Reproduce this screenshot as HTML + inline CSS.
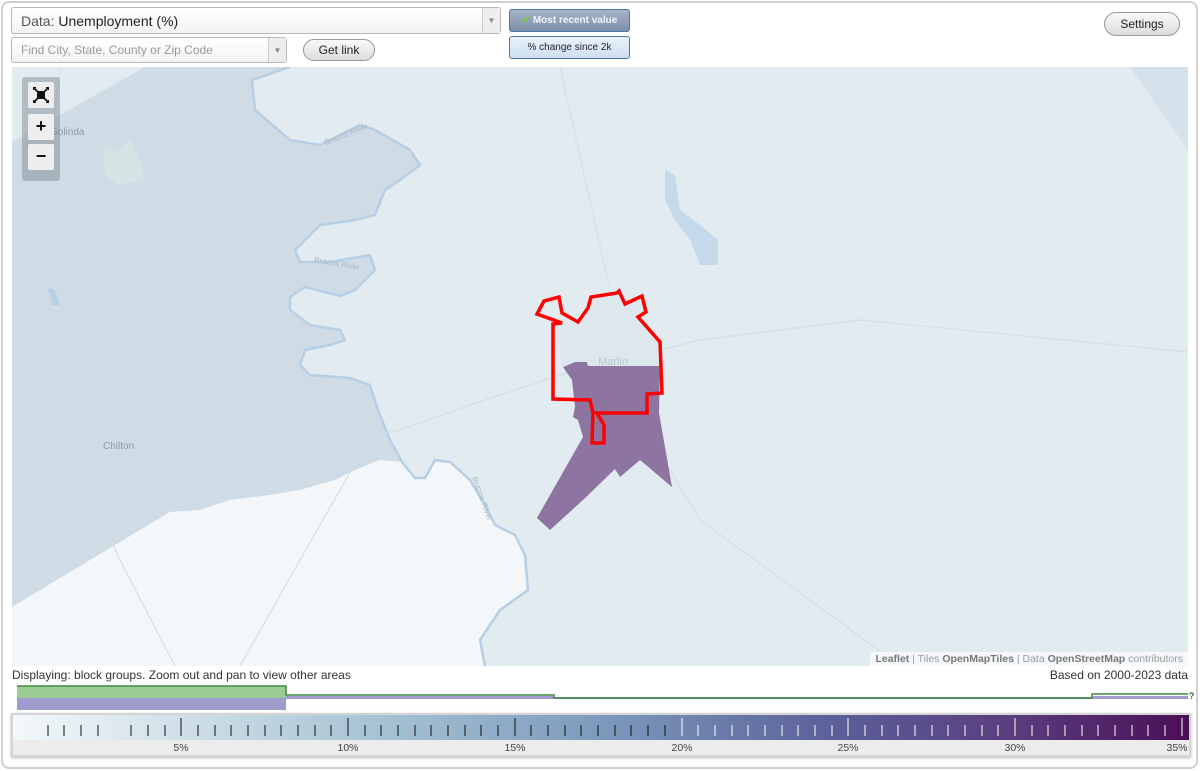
<!DOCTYPE html>
<html><head><meta charset="utf-8"><style>
*{box-sizing:border-box;margin:0;padding:0}
body{width:1200px;height:771px;background:#fff;font-family:"Liberation Sans",Arial,sans-serif;position:relative;overflow:hidden}
.frame{position:absolute;left:1px;top:1px;width:1197px;height:768px;border:2px solid #d0d0d0;border-radius:8px}
.sel{position:absolute;border:1px solid #b8b8b8;border-radius:3px;background:linear-gradient(#fff,#f3f3f3)}
.arr{position:absolute;right:0;top:0;bottom:0;width:18px;border-left:1px solid #ccc;background:#eee;color:#888;font-size:8px;text-align:center}
.btn{position:absolute;border:1px solid #999;border-radius:12px;background:linear-gradient(#fafafa,#dcdcdc);font-size:12px;color:#222;text-align:center}
.tb{position:absolute;border:1px solid #4a78a8;border-radius:3px;font-size:10px;text-align:center}
.map{position:absolute;left:12px;top:67px;width:1176px;height:599px;overflow:hidden;background:#e2ebf0}
.zc{position:absolute;left:10px;top:10px;width:38px;height:104px;background:rgba(120,130,140,.45);border-radius:3px}
.zb{position:absolute;left:6px;width:26px;height:26px;background:#eee;border-radius:2px;text-align:center;font-weight:bold;font-size:18px;line-height:25px;color:#111}
</style></head><body>
<div class="frame"></div>
<div class="sel" style="left:11px;top:7px;width:490px;height:27px"><span style="position:absolute;left:9px;top:5px;font-size:14px;color:#555">Data: <span style="color:#222">Unemployment (%)</span></span><div class="arr" style="line-height:26px">▼</div></div>
<div class="sel" style="left:11px;top:37px;width:276px;height:26px"><span style="position:absolute;left:9px;top:5px;font-size:12px;color:#999">Find City, State, County or Zip Code</span><div class="arr" style="line-height:25px">▼</div></div>
<div class="btn" style="left:303px;top:39px;width:72px;height:22px;line-height:20px">Get link</div>
<div class="tb" style="left:509px;top:9px;width:121px;height:23px;background:linear-gradient(#a7b4c8,#7d8ea8);color:#f0f4fa;font-weight:bold;line-height:21px"><span style="color:#7c3">✔</span> Most recent value</div>
<div class="tb" style="left:509px;top:36px;width:121px;height:23px;background:linear-gradient(#eaf2fb,#cddff2);color:#223;line-height:21px">% change since 2k</div>
<div class="btn" style="left:1104px;top:12px;width:76px;height:24px;line-height:22px">Settings</div>

<div class="map">
<svg width="1176" height="599" viewBox="12 67 1176 599" style="position:absolute;left:0;top:0">
<polygon points="1130,67 1188,67 1188,150" fill="#d5e1ea"/>
<polygon points="12,142 145,67 290,67 252,80 255,110 290,140 320,145 360,125 375,130 410,150 420,165 400,180 385,190 375,215 355,220 320,225 295,250 300,262 330,262 370,255 375,270 355,290 340,296 305,287 290,297 290,310 310,325 340,330 345,340 330,345 305,350 300,365 310,375 350,378 370,385 378,410 390,440 402,462 380,460 355,470 335,480 300,490 270,495 230,500 200,510 170,512 12,607" fill="#cfdce6"/>
<polygon points="12,607 170,512 200,510 230,500 270,495 300,490 335,480 355,470 380,460 402,462 415,478 425,478 435,460 450,462 470,480 485,505 495,525 515,535 525,555 528,590 500,610 480,640 485,666 12,666" fill="#f3f7f9"/>
<polyline points="290,67 252,80 255,110 290,140 320,145 360,125 375,130 410,150 420,165 400,180 385,190 375,215 355,220 320,225 295,250 300,262 330,262 370,255 375,270 355,290 340,296 305,287 290,297 290,310 310,325 340,330 345,340 330,345 305,350 300,365 310,375 350,378 370,385 378,410 390,440 402,462 415,478 425,478 435,460 450,462 470,480 485,505 495,525 515,535 525,555 528,590 500,610 480,640 485,666" fill="none" stroke="#b7cfe4" stroke-width="2.5"/>
<g fill="none" stroke="#d6dee3" stroke-width="1.2">
<polyline points="12,408 70,412 150,425 300,427 360,438 400,430 470,405 560,375 700,340 860,320 1188,352"/>
<polyline points="560,67 610,290 640,420 700,520 810,600 900,666"/>
<polyline points="60,67 45,200 60,420 120,560 175,666"/>
<polyline points="360,455 300,560 240,666"/>
</g>
<polygon points="665,170 675,175 680,210 700,225 718,240 718,265 700,265 690,240 675,220 665,200" fill="#c4daeb"/>
<polygon points="48,288 55,290 60,305 52,305" fill="#b8d0e6"/>
<polygon points="104,145 118,150 130,140 140,160 145,180 120,185 105,175" fill="#d5e3e5"/>
<polygon points="563,367 575,362 587,362 588,366 660,366 659,413 672,487 640,460 620,477 615,469 583,500 550,530 537,518 583,437 578,420 573,417 575,407 572,380" fill="#8e74a0"/>
<polygon points="563,367 555,325 562,323 578,322 588,308 591,297 617,293 625,304 642,296 646,312 638,317 660,342 660,366 588,366 587,362 575,362" fill="#dce8ee"/>
<polygon points="537,314 544,301 559,297 562,313 578,322 588,308 591,297 617,293 619,291 625,304 642,296 646,312 638,317 660,342 662,393 647,394 647,413 597,413 604,425 604,443 592,443 593,413 590,400 553,399 553,324 562,323" fill="none" stroke="#ff0000" stroke-width="3.5"/>
<text x="598" y="365" font-size="11" fill="#b9c6ce" font-family="Liberation Sans">Marlin</text>
<text x="103" y="449" font-size="10" fill="#8a9aa6" font-family="Liberation Sans">Chilton</text>
<text x="50" y="135" font-size="10" fill="#8a9aa6" font-family="Liberation Sans">Golinda</text>
<text x="326" y="145" font-size="8" fill="#a8b8c4" transform="rotate(-22 326 145)" font-family="Liberation Sans">Brazos River</text>
<text x="314" y="262" font-size="8" fill="#a8b8c4" transform="rotate(10 314 262)" font-family="Liberation Sans">Brazos River</text>
<text x="472" y="478" font-size="8" fill="#a8b8c4" transform="rotate(70 472 478)" font-family="Liberation Sans">Brazos River</text>
</svg>
<div class="zc">
<div class="zb" style="top:5px"><svg width="26" height="26" viewBox="0 0 26 26"><rect x="9" y="9" width="8" height="8" fill="#111"/><path d="M6 6l4 4M20 6l-4 4M6 20l4-4M20 20l-4-4" stroke="#111" stroke-width="1.8"/><path d="M5 5h3v1H6v2H5zM21 5h-3v1h2v2h1zM5 21h3v-1H6v-2H5zM21 21h-3v-1h2v-2h1z" fill="#111"/></svg></div>
<div class="zb" style="top:37px">+</div><div class="zb" style="top:67px">−</div></div>
<div style="position:absolute;right:0;bottom:0;background:rgba(255,255,255,.7);font-size:10.5px;color:#999;padding:1px 5px"><b style="color:#777">Leaflet</b> | Tiles <b style="color:#777">OpenMapTiles</b> | Data <b style="color:#777">OpenStreetMap</b> contributors</div>
</div>

<div style="position:absolute;left:12px;top:668px;font-size:12px;color:#333">Displaying: block groups. Zoom out and pan to view other areas</div>
<div style="position:absolute;right:12px;top:668px;font-size:12px;color:#333">Based on 2000-2023 data</div>
<svg width="1200" height="30" style="position:absolute;left:0;top:684px">
<rect x="17" y="14" width="269" height="12" fill="#9d9ccc"/>
<rect x="286" y="12" width="268" height="3" fill="#9d9ccc"/>
<rect x="554" y="13" width="538" height="2" fill="#9d9ccc"/>
<rect x="1092" y="12" width="96" height="3" fill="#9d9ccc"/>
<rect x="17" y="2" width="269" height="12" fill="#9ccb94"/>
<polyline points="17,2 286,2 286,11 554,11 554,14 1092,14 1092,10 1188,10" fill="none" stroke="#3c8c3c" stroke-width="1.5"/>
<text x="1189" y="15" font-size="9" font-family="Liberation Sans">?</text>
</svg>
<div style="position:absolute;left:11px;top:713px;width:1180px;height:44px;border:2px solid #d4d4d4;background:#ececec;box-shadow:0 1px 3px #bbb"></div>
<svg width="1176" height="38" style="position:absolute;left:13px;top:715px">
<defs><linearGradient id="g"><stop offset="0" stop-color="#f3f8fa"/><stop offset=".3" stop-color="#a9c5d5"/><stop offset=".5" stop-color="#7c9abc"/><stop offset=".7" stop-color="#5b5f98"/><stop offset=".85" stop-color="#5a3d7e"/><stop offset="1" stop-color="#4a0e56"/></linearGradient></defs>
<rect width="1176" height="25" fill="url(#g)"/>
<g font-size="10.5" fill="#444" font-family="Liberation Sans" text-anchor="middle">
<text x="168" y="36">5%</text><text x="335" y="36">10%</text><text x="502" y="36">15%</text><text x="669" y="36">20%</text><text x="835" y="36">25%</text><text x="1002" y="36">30%</text><text x="1164" y="36">35%</text></g>
<g stroke-width="1">
<path d="M35 10V21M51 10V21M68 10V21M85 10V21M118 10V21M135 10V21M152 10V21M168 3V21M185 10V21M202 10V21M218 10V21M235 10V21M252 10V21M268 10V21M285 10V21M302 10V21M318 10V21M335 3V21M352 10V21M368 10V21M385 10V21M402 10V21M418 10V21M435 10V21M452 10V21M468 10V21M485 10V21M502 3V21M518 10V21M535 10V21M552 10V21M568 10V21M585 10V21M602 10V21M618 10V21M635 10V21M652 10V21" stroke="#111"/>
<path d="M669 3V21M685 10V21M702 10V21M719 10V21M735 10V21M752 10V21M769 10V21M785 10V21M802 10V21M819 10V21M835 3V21M852 10V21M869 10V21M885 10V21M902 10V21M919 10V21M935 10V21M952 10V21M969 10V21M985 10V21M1002 3V21M1019 10V21M1035 10V21M1052 10V21M1069 10V21M1085 10V21M1102 10V21M1119 10V21M1135 10V21M1152 10V21M1169 3V21" stroke="#fff"/>
</g>
</svg>
</body></html>
